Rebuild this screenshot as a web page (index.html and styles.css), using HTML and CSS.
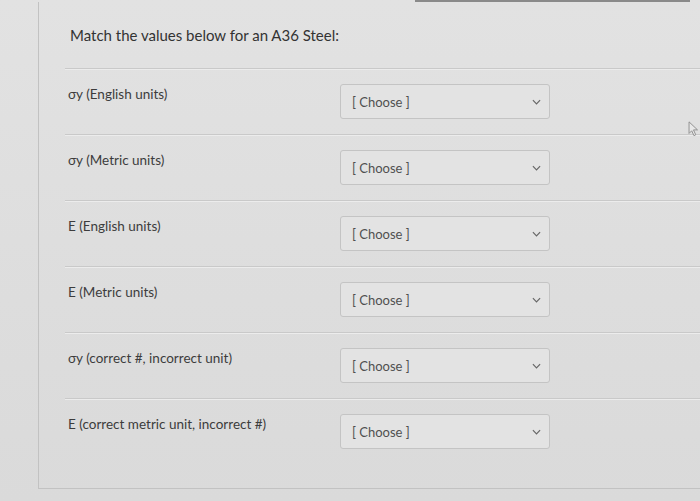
FILE: index.html
```html
<!DOCTYPE html>
<html>
<head>
<meta charset="utf-8">
<link rel="stylesheet" href="styles.css">
</head>
<body>
<div class="topbar"></div>
<div class="card">
  <h1 class="title">Match the values below for an A36 Steel:</h1>
  <div class="rows">
    <div class="row"><span class="label">σy (English units)</span><div class="select"><span>[ Choose ]</span><svg class="chev" viewBox="0 0 10 6" width="9" height="6"><path d="M1 1 L5 5 L9 1" fill="none" stroke="#666" stroke-width="1.3"/></svg></div></div>
    <div class="row"><span class="label">σy (Metric units)</span><div class="select"><span>[ Choose ]</span><svg class="chev" viewBox="0 0 10 6" width="9" height="6"><path d="M1 1 L5 5 L9 1" fill="none" stroke="#666" stroke-width="1.3"/></svg></div></div>
    <div class="row"><span class="label">E (English units)</span><div class="select"><span>[ Choose ]</span><svg class="chev" viewBox="0 0 10 6" width="9" height="6"><path d="M1 1 L5 5 L9 1" fill="none" stroke="#666" stroke-width="1.3"/></svg></div></div>
    <div class="row"><span class="label">E (Metric units)</span><div class="select"><span>[ Choose ]</span><svg class="chev" viewBox="0 0 10 6" width="9" height="6"><path d="M1 1 L5 5 L9 1" fill="none" stroke="#666" stroke-width="1.3"/></svg></div></div>
    <div class="row"><span class="label">σy (correct #, incorrect unit)</span><div class="select"><span>[ Choose ]</span><svg class="chev" viewBox="0 0 10 6" width="9" height="6"><path d="M1 1 L5 5 L9 1" fill="none" stroke="#666" stroke-width="1.3"/></svg></div></div>
    <div class="row last"><span class="label">E (correct metric unit, incorrect #)</span><div class="select"><span>[ Choose ]</span><svg class="chev" viewBox="0 0 10 6" width="9" height="6"><path d="M1 1 L5 5 L9 1" fill="none" stroke="#666" stroke-width="1.3"/></svg></div></div>
  </div>
</div>
<svg class="cursor" viewBox="0 0 12 18" width="11" height="16"><path d="M1 1 L1 14 L4 11 L6.5 16.5 L8.5 15.5 L6 10 L10.5 10 Z" fill="#e8e8e8" stroke="#888" stroke-width="1"/></svg>
</body>
</html>
```

FILE: styles.css
```css
html, body {
  margin: 0;
  padding: 0;
}
body {
  width: 700px;
  height: 501px;
  overflow: hidden;
  position: relative;
  background: linear-gradient(180deg, #e2e2e2 0%, #dddddd 60%, #dadada 100%);
  font-family: Lato, "Open Sans", "Liberation Sans", sans-serif;
  color: #3a3a3a;
}
.topbar {
  margin-left: 415px;
  width: 275px;
  height: 2px;
  background: #8a8a8a;
}
.card {
  margin-left: 38px;
  height: 487px;
  border-left: 1px solid #c2c2c2;
  border-bottom: 1px solid #c2c2c2;
  box-sizing: border-box;
  padding-left: 26px;
}
.title {
  margin: 0;
  padding-top: 24px;
  padding-left: 5px;
  font-size: 15px;
  font-weight: 400;
  line-height: 18px;
  color: #333;
  height: 42px;
}
.rows {
  display: flex;
  flex-direction: column;
}
.row {
  display: flex;
  align-items: flex-start;
  height: 66px;
  box-sizing: border-box;
  border-top: 1px solid #c9c9c9;
  box-shadow: inset 0 1px 0 #ececec;
  padding-top: 15px;
}
.label {
  width: 272px;
  padding-left: 3px;
  padding-top: 2px;
  font-size: 13.5px;
  line-height: 16px;
  color: #3c3c3c;
}
.select {
  width: 210px;
  height: 35px;
  box-sizing: border-box;
  border: 1px solid #c4c4c4;
  border-radius: 3px;
  background: #e3e3e3;
  display: flex;
  align-items: center;
  justify-content: space-between;
  padding: 0 8px 0 11px;
  font-size: 13px;
  color: #505050;
}
.chev {
  display: block;
}
.cursor {
  position: absolute;
  left: 688px;
  top: 121px;
}
```
